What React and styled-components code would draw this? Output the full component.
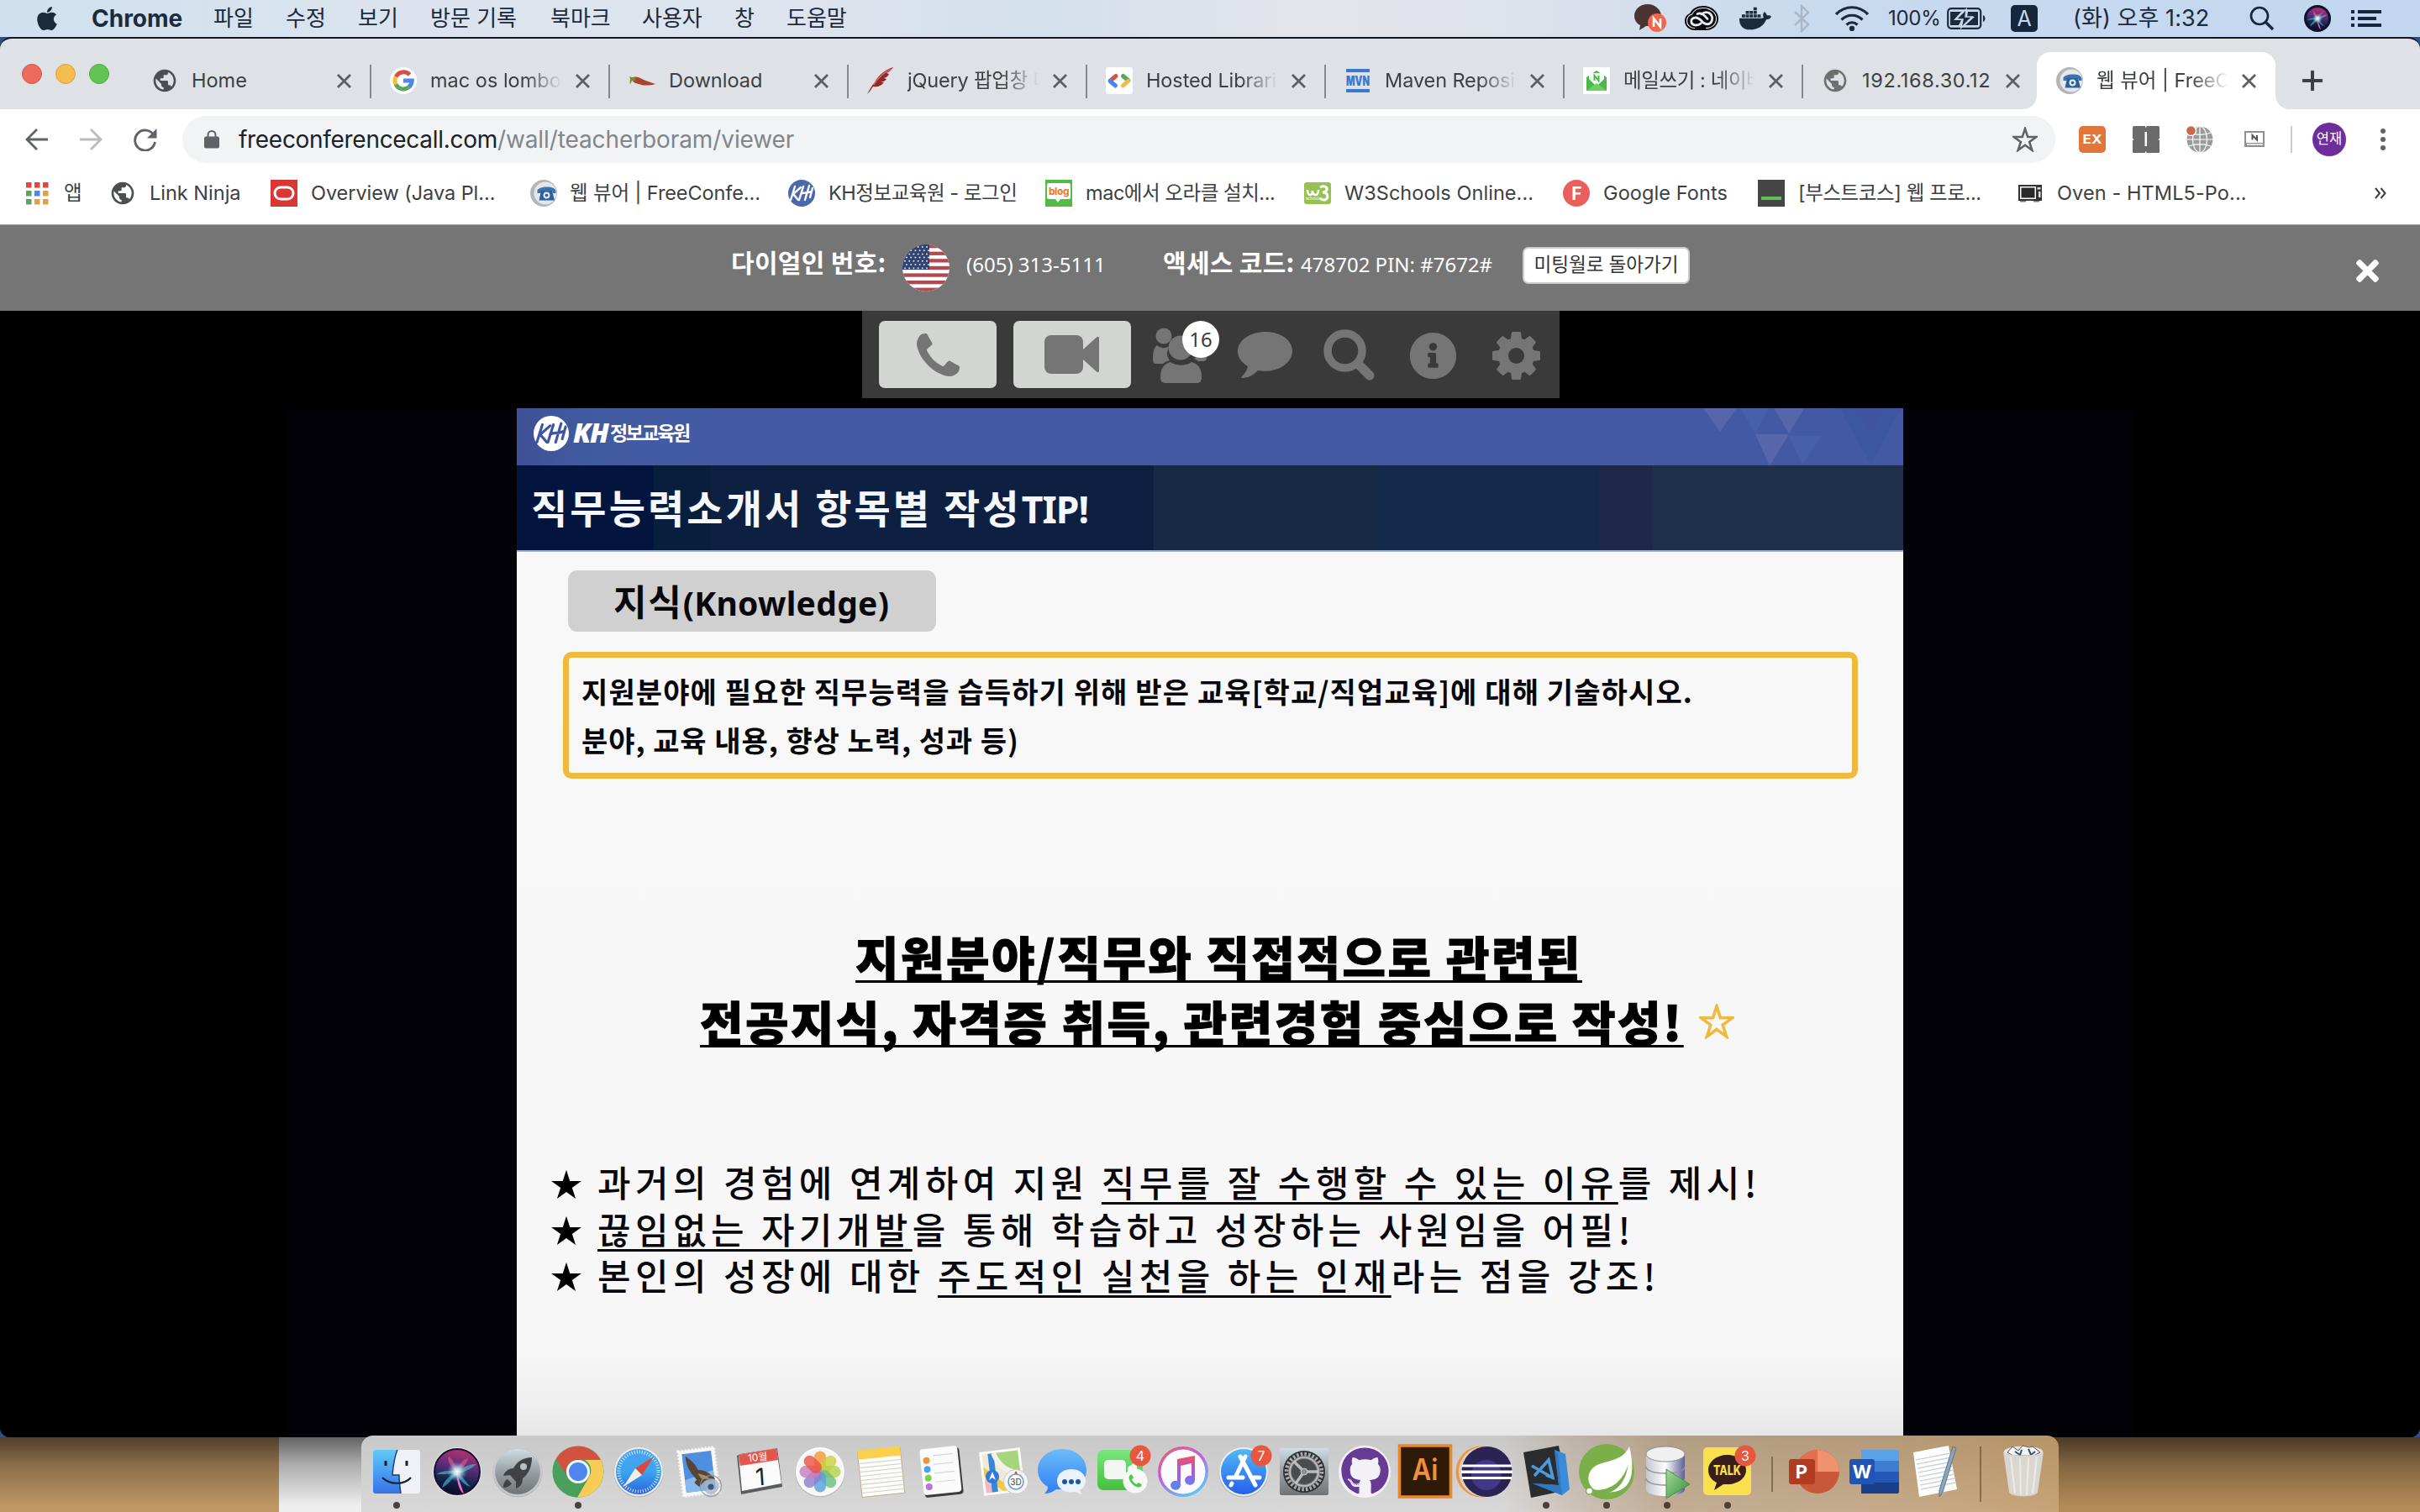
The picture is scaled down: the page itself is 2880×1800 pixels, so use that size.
import React from "react";
import styled, { createGlobalStyle, css } from "styled-components";
import { FaApple, FaDocker, FaGithub, FaInfoCircle, FaTimes } from "react-icons/fa";
import { MdPublic } from "react-icons/md";

const UI = `Inter, "Noto Sans CJK KR", sans-serif`;
const WEB = `"Noto Sans", "Noto Sans CJK KR", sans-serif`;
const DECK = `"Noto Sans CJK KR", "Noto Sans", sans-serif`;

const GlobalStyle = createGlobalStyle`
  * { box-sizing: border-box; }
  html, body { margin: 0; padding: 0; background: #b8925f; overflow: hidden; }
  body { font-family: ${UI}; -webkit-font-smoothing: antialiased; }
  svg { display: block; flex: none; }
`;

const Screen = styled.div`
  width: 2880px;
  height: 1800px;
  display: flex;
  flex-direction: column;
  overflow: hidden;
  background: #33507c;
`;

/* ---------- macOS menu bar ---------- */

const MenuBar = styled.header`
  height: 44px;
  flex: none;
  display: flex;
  align-items: center;
  padding-left: 40px;
  color: #1b2a3c;
  background: linear-gradient(90deg, #cfe0ef 0, #dbe4ee 16%, #dde4ed 33%, #d4e0ec 43%, #e4e5ea 54%, #dfe3ea 62%, #c8daee 74%, #c2d7f0 100%);
`;

const MenuText = styled.span`
  width: ${(p) => p.$w}px;
  flex: none;
  white-space: nowrap;
  font-size: ${(p) => p.$size || 26}px;
  line-height: 40px;
  font-weight: ${(p) => (p.$bold ? 700 : 400)};
  letter-spacing: ${(p) => p.$ls || 0}px;
`;

const MenuSlot = styled.span`
  width: ${(p) => p.$w}px;
  flex: none;
  display: flex;
  align-items: center;
`;

const Spacer = styled.span`
  flex: 1;
`;

/* ---------- browser window ---------- */

const BrowserWindow = styled.main`
  height: 1667px;
  flex: none;
  display: flex;
  flex-direction: column;
  border-top: 2px solid #101828;
  border-radius: 14px 14px 12px 12px;
  background: #000;
  overflow: hidden;
`;

const TabStrip = styled.div`
  height: 84px;
  flex: none;
  display: flex;
  align-items: flex-end;
  padding-left: 26px;
  background: #dee1e6;
`;

const Lights = styled.div`
  width: 131px;
  height: 84px;
  display: flex;
  align-items: center;
  gap: 16px;
`;

const Light = styled.i`
  width: 24px;
  height: 24px;
  border-radius: 50%;
  background: ${(p) => p.$c};
  border: 1px solid ${(p) => p.$b};
`;

const Tab = styled.div`
  position: relative;
  width: ${(p) => p.$w || 284}px;
  height: 68px;
  flex: none;
  display: flex;
  align-items: center;
  padding-left: 23px;
  color: #3c4043;
  ${(p) =>
    p.$divider &&
    css`
      &::after {
        content: "";
        position: absolute;
        right: -1px;
        top: 15px;
        width: 2px;
        height: 40px;
        background: #85888c;
      }
    `}
  ${(p) =>
    p.$active &&
    css`
      margin-left: -2px;
      background: #fff;
      border-radius: 16px 16px 0 0;
      &::before,
      &::after {
        content: "";
        position: absolute;
        bottom: 0;
        width: 16px;
        height: 16px;
      }
      &::before {
        left: -16px;
        background: radial-gradient(circle at 0 0, transparent 15.5px, #fff 16px);
      }
      &::after {
        right: -16px;
        background: radial-gradient(circle at 100% 0, transparent 15.5px, #fff 16px);
      }
    `}
`;

const TabTitle = styled.span`
  width: ${(p) => p.$w || 157}px;
  margin-left: 16px;
  overflow: hidden;
  white-space: nowrap;
  font-size: 23.5px;
  line-height: 36px;
  letter-spacing: ${(p) => p.$ls || 0}px;
  mask-image: ${(p) => (p.$fade ? "linear-gradient(90deg, #000 112px, transparent 157px)" : "none")};
`;

const TabClose = styled.span`
  margin-left: 16px;
`;

const NewTab = styled.span`
  height: 68px;
  display: flex;
  align-items: center;
  margin-left: 31px;
`;

const NavBar = styled.div`
  height: 72px;
  flex: none;
  display: flex;
  align-items: center;
  background: #fff;
`;

const NavSlot = styled.span`
  width: ${(p) => p.$w}px;
  flex: none;
  display: flex;
  justify-content: center;
`;

const Omnibox = styled.div`
  width: 2229px;
  height: 56px;
  display: flex;
  align-items: center;
  padding: 0 21px 0 26px;
  border-radius: 28px;
  background: #f1f3f4;
`;

const Url = styled.span`
  margin-left: 23px;
  flex: 1;
  font-size: 28px;
  letter-spacing: -0.1px;
  line-height: 40px;
  color: #80868b;
  b {
    font-weight: 400;
    color: #202124;
    letter-spacing: -0.3px;
  }
`;

const Avatar = styled.span`
  width: 40px;
  height: 40px;
  border-radius: 50%;
  background: #6f2c9b;
  color: #fff;
  font-size: 16.5px;
  line-height: 38px;
  text-align: center;
`;

const NavDivider = styled.i`
  width: 2px;
  height: 32px;
  background: #c9cbcd;
`;

const BookmarkBar = styled.div`
  height: 66px;
  flex: none;
  display: flex;
  align-items: center;
  padding: 0 0 9px 31px;
  border-bottom: 1px solid #a3a3a3;
  background: #fff;
`;

const Bookmark = styled.span`
  width: ${(p) => p.$w}px;
  flex: none;
  display: flex;
  align-items: center;
  color: #3c4043;
  white-space: nowrap;
  font-size: 23.5px;
  line-height: 36px;
  letter-spacing: ${(p) => p.$ls || 0}px;
`;

const BookmarkText = styled.span`
  margin-left: ${(p) => p.$gap || 16}px;
`;

/* ---------- meeting viewer page ---------- */

const CallHeader = styled.div`
  height: 102px;
  flex: none;
  display: flex;
  align-items: center;
  padding: 0 43px 0 870px;
  background: #757575;
  color: #fff;
  font-family: ${WEB};
`;

const CallLabel = styled.span`
  width: ${(p) => p.$w}px;
  flex: none;
  padding-bottom: 17px;
  white-space: nowrap;
  font-family: ${DECK};
  font-weight: 700;
  font-size: 30px;
  line-height: 40px;
  letter-spacing: ${(p) => p.$ls || 0}px;
`;

const CallValue = styled.span`
  width: ${(p) => p.$w}px;
  flex: none;
  padding-bottom: 8px;
  padding-left: ${(p) => p.$pad || 0}px;
  white-space: nowrap;
  font-size: 24px;
  line-height: 34px;
  letter-spacing: ${(p) => p.$ls || 0}px;
`;

const ReturnButton = styled.button`
  width: 199px;
  height: 44px;
  margin-bottom: 6px;
  padding: 0 0 3px;
  border: 2px solid #ccc;
  border-radius: 7px;
  background: #fff;
  color: #333;
  font: 400 22.6px/36px ${WEB};
  white-space: nowrap;
`;

const CloseWrap = styled.span`
  padding-top: 7px;
`;

const VideoArea = styled.section`
  flex: 1;
  display: flex;
  flex-direction: column;
  align-items: center;
  background: linear-gradient(90deg, #000 340px, #010107 341px, #010107 2540px, #000 2541px);
`;

const ControlWrap = styled.div`
  width: 100%;
  height: 116px;
  flex: none;
  display: flex;
  justify-content: center;
  background: #000;
`;

const ControlBar = styled.div`
  width: 830px;
  height: 104px;
  display: flex;
  align-items: flex-start;
  padding: 12px 0 0 20px;
  background: #3a3a3a;
  margin-left: 2px;
`;

const MediaButton = styled.button`
  width: 140px;
  height: 80px;
  margin-right: ${(p) => p.$mr}px;
  display: flex;
  align-items: center;
  justify-content: center;
  border: 0;
  border-radius: 7px;
  background: #d3d5d2;
`;

const ControlSlot = styled.span`
  position: relative;
  width: ${(p) => p.$w}px;
  height: 82px;
  display: flex;
  align-items: center;
  color: #757575;
`;

const CountBadge = styled.span`
  position: absolute;
  left: 37px;
  top: 0;
  width: 44px;
  height: 44px;
  border-radius: 50%;
  background: #fff;
  color: #3a3a3a;
  font: 400 24px/43px ${WEB};
  text-align: center;
`;

const Slide = styled.article`
  width: 1650px;
  flex: 1;
  display: flex;
  flex-direction: column;
  align-items: flex-start;
  background: linear-gradient(#f8f8f8 0, #f7f7f7 91%, #eeeeee 97%, #e6e6e6 100%);
  color: #08080c;
  font-family: ${DECK};
`;

const BrandBar = styled.div`
  width: 100%;
  height: 68px;
  flex: none;
  display: flex;
  align-items: center;
  padding: 0 0 8px 20px;
  background: linear-gradient(90deg, #3f4f96 0, #405a9f 70px, #435ba3 200px, #4459a3 400px);
  color: #fff;
`;

const BrandLatin = styled.span`
  margin: -3px 0 0 5px;
  width: 44px;
  font: italic 800 32px/40px "Open Sans", sans-serif;
  letter-spacing: -1.5px;
`;

const BrandKorean = styled.span`
  margin-top: -4px;
  font-size: 23px;
  font-weight: 700;
  line-height: 40px;
  letter-spacing: -2.4px;
`;

const BrandPattern = styled.span`
  margin: 0 0 -8px auto;
`;

const TitleBand = styled.h1`
  width: 100%;
  height: 103px;
  flex: none;
  margin: 0;
  padding: 0 0 2px 17px;
  color: #f6f7fa;
  font-size: 47px;
  font-weight: 700;
  line-height: 98px;
  letter-spacing: 3.1px;
  white-space: nowrap;
  border-bottom: 2px solid #a9b0bd;
  background: linear-gradient(90deg, #03153f 0 163px, #071f3c 163px 231px, #0d2042 231px 758px, #172945 758px 1023px, #15294c 1023px 1288px, #1e2849 1288px 1352px, #1e304c 1352px);
`;

const TitleLatin = styled.span`
  font-family: "Noto Sans", sans-serif;
  font-weight: 700;
  font-size: 44.5px;
  letter-spacing: -0.9px;
`;

const TopicChip = styled.div`
  width: 438px;
  height: 73px;
  margin: 22px 0 0 61px;
  padding-left: 54px;
  border-radius: 11px;
  background: #d0d0d0;
  font-size: 43px;
  font-weight: 700;
  line-height: 71px;
  letter-spacing: 1.8px;
  white-space: nowrap;
  span {
    font-family: "Noto Sans", sans-serif;
    font-weight: 700;
    font-size: 39px;
    letter-spacing: 0.3px;
  }
`;

const QuestionBox = styled.div`
  width: 1541px;
  height: 151px;
  margin: 24px 0 0 55px;
  padding: 11px 0 0 15px;
  border: 7px solid #efb93e;
  border-radius: 10px;
  font-size: 34px;
  font-weight: 700;
  line-height: 58px;
  white-space: nowrap;
`;

const QuestionLine = styled.div`
  letter-spacing: ${(p) => p.$ls}px;
`;

const Headline = styled.div`
  display: flex;
  flex-direction: column;
  margin-top: 172px;
  font-size: 56px;
  font-weight: 900;
  color: #000;
  -webkit-text-stroke: 1px #000;
`;

const HeadlineRow = styled.div`
  height: 77px;
  display: flex;
  align-items: center;
  padding-left: ${(p) => p.$indent}px;
  letter-spacing: ${(p) => p.$ls}px;
  line-height: 77px;
  white-space: nowrap;
`;

const Underlined = styled.span`
  text-decoration: underline;
  text-decoration-skip-ink: none;
  text-decoration-thickness: 3px;
  text-underline-offset: ${(p) => p.$off || 6}px;
`;

const HeadlineStar = styled.span`
  margin-left: 18px;
  padding-top: 3px;
`;

const Bullets = styled.ul`
  margin: 126px 0 0;
  padding: 0 0 0 41px;
  list-style: none;
  font-size: 43px;
  font-weight: 500;
  letter-spacing: 5.4px;
`;

const Bullet = styled.li`
  height: 55.4px;
  display: flex;
  align-items: center;
  white-space: nowrap;
  svg {
    margin: 6px 17px 0 -2px;
  }
  div {
    line-height: 55px;
  }
`;

/* ---------- desktop and dock ---------- */

const Desk = styled.footer`
  height: 91px;
  margin-top: -2px;
  flex: none;
  position: relative;
  display: flex;
  justify-content: center;
  background:
    linear-gradient(rgba(0, 0, 0, 0.6), rgba(0, 0, 0, 0.3) 35%, rgba(0, 0, 0, 0.03) 90%) 0 2px no-repeat,
    linear-gradient(90deg, #c69c68 0 332px, #f6f6f6 332px 1900px, #b98f5b 1900px) 0 2px no-repeat;
`;

const Dock = styled.nav`
  width: 2020px;
  height: 91px;
  display: flex;
  padding-left: 6px;
  border-radius: 14px 14px 0 0;
  background:
    linear-gradient(rgba(0, 0, 0, 0.06), rgba(255, 255, 255, 0.08)),
    linear-gradient(90deg, #d5d5d5 0 1360px, #c9bfb4 1440px, #bea78c 1560px, #c0a482 1800px, #c39c6c 2020px);
`;

const DockSlot = styled.span`
  width: 72px;
  flex: none;
  display: flex;
  flex-direction: column;
  align-items: center;
  padding-top: 11px;
`;

const RunningDot = styled.i`
  width: 8px;
  height: 8px;
  margin-top: 4px;
  border-radius: 50%;
  background: #4a4038;
`;

const DockDivider = styled.i`
  width: 2px;
  height: ${(p) => p.$h}px;
  margin: ${(p) => p.$mt}px 14px ${(p) => p.$mt}px 16px;
  background: rgba(90, 65, 40, 0.55);
  flex: none;
`;

/* ---------- icon drawings ---------- */

const T = ({ children, ...p }) => (
  <text textAnchor="middle" fontFamily="Inter, 'Noto Sans CJK KR', sans-serif" {...p}>
    {children}
  </text>
);

const KakaoTray = () => (
  <svg width="38" height="34" viewBox="0 0 38 34">
    <path d="M16 0C7 0 0 6 0 14c0 5 3 9 7 11l-1 6 8-5h2c9 0 16-5 16-12S25 0 16 0z" fill="#4a3432" />
    <circle cx="27" cy="22" r="11" fill="#f0654d" />
    <path d="M23 27V17l8 10V17" stroke="#fff" strokeWidth="2.6" fill="none" />
  </svg>
);
const CloudTray = () => (
  <svg width="40" height="30" viewBox="0 0 40 30">
    <path d="M12 29C5 29 0 24 0 18c0-5 3-8 6-9C9 3 15 0 22 0c10 0 18 7 18 15 0 9-7 14-15 14z" fill="#0a0a0c" />
    <path d="M12 26.500C7 26.500 2.500 23 2.500 18c0-4 3-7 6-8 2-4 7-7.500 13.500-7.500C30 2.500 37.500 8 37.500 15c0 7-5 11.500-12.500 11.500" fill="none" stroke="#dbe4ee" strokeWidth="1.200" />
    <g fill="none" stroke="#e4ebf3" strokeWidth="2.800" strokeLinecap="round">
      <path d="M19 21c-2 2-4 2-6 2-7-1-7-9 0-9 4 0 6 3 9 6 3 2 6 3 9 0 3-4 2-10-3-12-3-1-6 0-8 2" />
      <path d="M15 9.500c5-2 8 1 12 6" />
    </g>
  </svg>
);
const Bluetooth = () => (
  <svg width="20" height="34" viewBox="0 0 20 34" fill="none" stroke="#a9b8c9" strokeWidth="2.4">
    <path d="M1 9l16 15-8 8V2l8 8L1 25" />
  </svg>
);
const Wifi = () => (
  <svg width="42" height="30" viewBox="0 0 42 30" fill="none" stroke="#1b2a3c" strokeWidth="3.2">
    <path d="M2 10C13-1 29-1 40 10" />
    <path d="M8.500 16.500c7-7 18-7 25 0" />
    <path d="M14.500 22.500c4-3.500 9-3.500 13 0" />
    <circle cx="21" cy="27" r="1.600" fill="#1b2a3c" />
  </svg>
);
const Battery = () => (
  <svg width="46" height="26" viewBox="0 0 46 26">
    <rect x="1.200" y="1.200" width="39" height="23.600" rx="4" fill="none" stroke="#1b2a3c" strokeWidth="2.200" />
    <path d="M43 9v8c2-1 2.500-2.500 2.500-4S45 10 43 9z" fill="#1b2a3c" />
    <path d="M4 5h13L8 15h9l-3 6H4zM25 5h12v16H22l11-10h-9z" fill="#1b2a3c" />
    <path d="M23 2L11 14h8l-2 10 13-13h-8z" fill="#1b2a3c" stroke="#c8daee" strokeWidth="1.500" />
  </svg>
);
const InputA = () => (
  <svg width="32" height="32" viewBox="0 0 32 32">
    <rect width="32" height="32" rx="5" fill="#14273c" />
    <T x="16" y="25" fontSize="25" fill="#c5d9ef">A</T>
  </svg>
);
const Search = () => (
  <svg width="30" height="30" viewBox="0 0 30 30" fill="none" stroke="#14273c" strokeWidth="2.700">
    <circle cx="12" cy="12" r="10" />
    <path d="M19 19l9 9" strokeWidth="3.400" />
  </svg>
);
const Siri = ({ size, ring }) => (
  <svg width={size} height={size} viewBox="0 0 64 64">
    <defs>
      <linearGradient id={`sr${size}`} x1=".6" y1="0" x2=".4" y2="1">
        <stop offset="0" stopColor="#b8316f" />
        <stop offset=".4" stopColor="#5a2d78" />
        <stop offset=".7" stopColor="#14254c" />
        <stop offset="1" stopColor="#0b0b22" />
      </linearGradient>
      <radialGradient id={`sg${size}`}>
        <stop offset="0" stopColor="#fff" />
        <stop offset=".35" stopColor="#d5f4f6" stopOpacity=".8" />
        <stop offset="1" stopColor="#4fc5d8" stopOpacity="0" />
      </radialGradient>
    </defs>
    <circle cx="32" cy="32" r={ring ? 29 : 32} fill={ring ? "#e9e9ee" : "#0a1230"} />
    <circle cx="32" cy="32" r="27" fill={`url(#sr${size})`} stroke="#15112e" strokeWidth="2" />
    <path d="M7 35c8-5 16-4 25-4 7-3 14-9 23-8-6 6-14 9-21 11 6 6 10 12 14 16-8-2-12-8-17-14-6 5-10 12-17 15 2-7 7-12 14-17-8 1-14 1-21 1z" fill="#4fc5d8" opacity=".6" />
    <path d="M31 32C24 26 20 19 22 14c5 3 8 10 10 17 1-6 6-13 13-15-1 6-6 12-12 16z" fill="#e05f9c" opacity=".6" />
    <path d="M31 32l9 26c-5-2-8-12-9-26z" fill="#f070c0" />
    <circle cx="32" cy="32" r="12" fill={`url(#sg${size})`} />
  </svg>
);
const ListIcon = () => (
  <svg width="36" height="20" viewBox="0 0 36 20" fill="#14273c">
    <path d="M0 0h4v4H0zM8 0h28v4H8zM0 8h4v4H0zM8 8h22v4H8zM0 16h4v4H0zM8 16h28v4H8z" />
  </svg>
);

const GlobeIcon = ({ color = "#4b4f54" }) => (
  <svg width="32" height="32" viewBox="0 0 24 24">
    <MdPublic size={24} color={color} />
  </svg>
);
const GoogleIcon = () => (
  <svg width="32" height="32" viewBox="0 0 32 32" fill="none" strokeWidth="5">
    <circle cx="16" cy="16" r="16" fill="#fff" />
    <path d="M23.500 9A10 10 0 0 0 7.200 11.500" stroke="#d95140" />
    <path d="M7.200 11.300a10 10 0 0 0 0 9.400" stroke="#f0bd42" />
    <path d="M7.100 20.500A10 10 0 0 0 22.500 23.700" stroke="#58a55c" />
    <path d="M16 16h10.300a10 10 0 0 1-3.800 7.700" stroke="#4f86ec" />
  </svg>
);
const PepperIcon = () => (
  <svg width="32" height="32" viewBox="0 0 32 32">
    <path d="M4 13c4-3 8-1 12 1s10 4 16 6c-6 2-15 2-20 0-5-1-8-3-8-7z" fill="#a8452c" />
    <path d="M1 11l3 1c2 0 4 0 5 2l-3 3-2-1c-1 2-1 3-2 4-1-3 0-5 0-7z" fill="#7d8a3a" />
  </svg>
);
const FeatherIcon = () => (
  <svg width="32" height="32" viewBox="0 0 32 32">
    <path d="M31 0C21 3 13 10 9 18 5 22 3 27 0 32l3-3 4-6c6 1 10-1 13-5h-4c4-1 6-2 7-4l-3-1c4-1 5-3 6-5l-3-1c4-2 6-4 8-7z" fill="#8f2a2a" />
    <path d="M29 2C20 6 13 12 8 21" stroke="#d9655a" strokeWidth="1.500" fill="none" />
  </svg>
);
const HostedIcon = () => (
  <svg width="32" height="32" viewBox="0 0 32 32" fill="none" strokeWidth="5">
    <rect width="32" height="32" rx="4" fill="#fff" />
    <path d="M12 10.500L5.500 16" stroke="#d95140" strokeLinecap="round" />
    <path d="M5 16.500l6.500 5.500" stroke="#4f86ec" strokeLinecap="round" />
    <path d="M20.500 10.500L27 16" stroke="#58a55c" strokeLinecap="round" />
    <path d="M26.500 16.500L20.500 22" stroke="#f0bd42" strokeLinecap="round" />
  </svg>
);
const MavenIcon = () => (
  <svg width="32" height="32" viewBox="0 0 32 32">
    <path d="M2 2h28v4H2zM2 26h28v4H2z" fill="#3a78cf" />
    <T x="16" y="21.500" fontSize="15.500" fontWeight="900" textLength="28" lengthAdjust="spacingAndGlyphs" fill="#3a78cf">MVN</T>
  </svg>
);
const NaverMailIcon = () => (
  <svg width="32" height="32" viewBox="0 0 32 32">
    <rect width="32" height="32" fill="#fff" />
    <path d="M4 12l12-8 12 8v16H4z" fill="#4fb64a" />
    <path d="M7 9c0-1 1-2 2-2h14c1 0 2 1 2 2v5l-9 9-9-9z" fill="#f4fbf3" />
    <path d="M13.500 16v-6l5 6v-6" stroke="#4fb64a" strokeWidth="2" fill="none" />
    <path d="M4 28l12-9 12 9z" fill="#6ad05f" />
  </svg>
);
const PhoneBallIcon = () => (
  <svg width="32" height="32" viewBox="0 0 32 32">
    <circle cx="16" cy="16" r="16" fill="#b4b4b4" />
    <circle cx="18" cy="16" r="13.500" fill="#e3e8ed" />
    <path d="M8.500 13c0-5 20-7 22 0v3h-4v-2.500h-13V16h-5z" fill="#3a72ab" />
    <path d="M13 13h13l3 11.500H10.500z" fill="#2b609b" />
    <circle cx="19.500" cy="18.500" r="4" fill="#dfe8f1" />
    <circle cx="19.500" cy="18.500" r="1.800" fill="#2b609b" />
  </svg>
);
const AppsIcon = () => (
  <svg width="27" height="27" viewBox="0 0 27 27">
    {["#dd4b3e", "#dd4b3e", "#dd4b3e", "#58a55c", "#4f86ec", "#e3a33c", "#58a55c", "#e3a33c", "#e3a33c"].map((c, i) => (
      <rect key={i} x={(i % 3) * 10} y={Math.floor(i / 3) * 10} width="6.500" height="6.500" fill={c} />
    ))}
  </svg>
);
const OracleIcon = () => (
  <svg width="32" height="32" viewBox="0 0 32 32">
    <rect width="32" height="32" fill="#d93832" />
    <rect x="5" y="9" width="22" height="14" rx="7" fill="none" stroke="#fff" strokeWidth="3" />
  </svg>
);
const KHIcon = ({ size = 32, fg = "#fff", bg = "#4a69ad" }) => (
  <svg width={size} height={size} viewBox="0 0 32 32">
    <circle cx="16" cy="16" r="16" fill={bg} />
    <g fill="none" stroke={fg} strokeWidth="2.400" strokeLinecap="round">
      <path d="M8 8L3 24M15 9L6 17l6 7M18 8l-5 16M25 7l-5 17M15 17c4-3 7 0 12-3M29 10l-3 11" />
    </g>
  </svg>
);
const BlogIcon = () => (
  <svg width="32" height="32" viewBox="0 0 32 32">
    <rect width="32" height="32" fill="#52bd45" />
    <path d="M4 4h24a2 2 0 0 1 2 2v15a2 2 0 0 1-2 2H18l-3 4-3-4H4a2 2 0 0 1-2-2V6a2 2 0 0 1 2-2z" fill="#fff" />
    <T x="16" y="17.500" fontSize="12" fontWeight="800" textLength="24" lengthAdjust="spacingAndGlyphs" fill="#e8802f">blog</T>
  </svg>
);
const W3Icon = () => (
  <svg width="32" height="32" viewBox="0 0 32 32">
    <rect y="3" width="32" height="26" rx="3" fill="#97c153" />
    <path d="M4 12c0 8 6 8 6 1 0 7 7 7 7-1" stroke="#fff" strokeWidth="2.600" fill="none" />
    <path d="M19 9c5-3 9 0 8 3-1 2-3 3-5 3 4 0 6 2 6 5-1 5-6 5-9 2" stroke="#fff" strokeWidth="3" fill="none" />
    <T x="11" y="23.500" fontSize="5" fill="#fff">schools</T>
  </svg>
);
const FIcon = () => (
  <svg width="32" height="32" viewBox="0 0 32 32">
    <circle cx="16" cy="16" r="16" fill="#ea5f5d" />
    <T x="16.500" y="23.500" fontSize="21" fontWeight="700" fill="#fff">F</T>
  </svg>
);
const BoostIcon = () => (
  <svg width="32" height="32" viewBox="0 0 32 32">
    <rect width="32" height="32" fill="#454545" />
    <rect x="4" y="20" width="24" height="4" fill="#5cc350" />
  </svg>
);
const OvenIcon = () => (
  <svg width="32" height="32" viewBox="0 0 32 32">
    <path d="M4 24h7v2.500H4zM20 24h7v2.500h-7z" fill="#777" />
    <rect x="2" y="6" width="28" height="19" fill="#333" />
    <rect x="4" y="8" width="19" height="15" fill="#fff" />
    <rect x="5.500" y="9.500" width="16" height="12" fill="#2a2a2a" />
    <path d="M24.500 9h4v2.500h-4zM26 14h2.500v7H26z" fill="#ddd" />
  </svg>
);

const CloseIcon = () => (
  <svg width="17" height="17" viewBox="0 0 17 17" stroke="#5a5e62" strokeWidth="2.800">
    <path d="M1 1l15 15M16 1L1 16" />
  </svg>
);

const Arrow = ({ flip, color }) => (
  <svg width="28" height="28" viewBox="0 0 28 28" fill="none" stroke={color} strokeWidth="2.800">
    <path d={flip ? "M1 14h24M14 2l12 12-12 12" : "M27 14H3M14 2L2 14l12 12"} />
  </svg>
);
const Reload = () => (
  <svg width="30" height="28" viewBox="0 0 30 28">
    <path d="M25 9A12 12 0 1 0 26.500 17" fill="none" stroke="#5f6368" strokeWidth="2.900" />
    <path d="M28.500 1v11.500H17z" fill="#5f6368" />
  </svg>
);
const Lock = () => (
  <svg width="18" height="22" viewBox="0 0 18 22">
    <rect y="7.500" width="18" height="14" rx="2" fill="#5f6368" />
    <path d="M4.500 8V5.500a4.500 4.500 0 0 1 9 0V8" fill="none" stroke="#5f6368" strokeWidth="2" />
  </svg>
);
const STAR = "M16 1l3.700 11.400h12L22 19.500l3.700 11.400L16 23.900 6.300 30.900 10 19.500.300 12.400h12z";
const Star = ({ size, color, w, fill = "none" }) => (
  <svg width={size} height={size} viewBox="-1.500 -1.500 35 35">
    <path d={STAR} fill={fill} stroke={color} strokeWidth={w} />
  </svg>
);
const ExIcon = () => (
  <svg width="32" height="32" viewBox="0 0 32 32">
    <rect width="32" height="32" rx="5" fill="#e2763a" />
    <T x="16" y="21" fontSize="14.500" fontWeight="700" textLength="23" lengthAdjust="spacingAndGlyphs" fill="#fff">EX</T>
  </svg>
);
const PipeIcon = () => (
  <svg width="32" height="32" viewBox="0 0 32 32">
    <rect width="32" height="32" rx="1.500" fill="#6b6b6b" />
    <path d="M14.500 7h2.500v17h-2.500z" fill="#fff" />
    <path d="M15 0h1.500v1.500H15zM15 30.500h1.500V32H15zM0 15h1.200v2H0zM30.800 15H32v2h-1.200z" fill="#fff" />
  </svg>
);
const GridGlobeIcon = () => (
  <svg width="32" height="32" viewBox="0 0 32 32">
    <circle cx="16" cy="16" r="15.500" fill="#9b9b9b" />
    <g fill="none" stroke="#fff" strokeWidth="1.200">
      <path d="M16 0v32M0 16h32M3 8c8 3 18 3 26 0M3 24c8-3 18-3 26 0" />
      <ellipse cx="16" cy="16" rx="8.500" ry="15.500" />
    </g>
    <circle cx="5.500" cy="5.500" r="6" fill="#c96a44" stroke="#fff" strokeWidth="1.500" />
  </svg>
);
const ReaderIcon = () => (
  <svg width="26" height="20" viewBox="0 0 26 20">
    <path d="M2 1h22v17H2z" fill="#fff" stroke="#8f8f8f" strokeWidth="2" />
    <path d="M1 14h24v5H1z" fill="#8f8f8f" />
    <path d="M4 16h19" stroke="#fff" strokeWidth="1.400" />
    <path d="M10.500 10.500V5l5.500 5.500V5" stroke="#555" strokeWidth="2" fill="none" />
  </svg>
);
const Dots = () => (
  <svg width="8" height="28" viewBox="0 0 8 28" fill="#5f6368">
    <circle cx="4" cy="4" r="3" /><circle cx="4" cy="14" r="3" /><circle cx="4" cy="24" r="3" />
  </svg>
);

const Flag = () => (
  <svg width="56" height="56" viewBox="0 0 56 56">
    <clipPath id="flagClip"><circle cx="28" cy="28" r="28" /></clipPath>
    <g clipPath="url(#flagClip)">
      <rect width="56" height="56" fill="#fff" />
      {[0, 1, 2, 3, 4, 5, 6].map((i) => (
        <rect key={i} y={i * 8.600} width="56" height="4.300" fill="#b04a50" />
      ))}
      <rect width="32" height="30" fill="#2f4373" />
      {Array.from({ length: 42 }, (_, i) => (
        <circle key={i} cx={3 + (i % 6) * 5.200 + (Math.floor(i / 6) % 2) * 2} cy={3 + Math.floor(i / 6) * 4.200} r="1" fill="#dfe4ef" />
      ))}
    </g>
  </svg>
);
const HandsetPath =
  "M1408 1240q0 27-10 70.500t-21 68.500q-21 50-122 106-94 51-186 51-27 0-53-3.500t-57.500-12.500-47-14.500-55.500-20.500-49-18q-98-35-175-83-127-79-264-216t-216-264q-48-77-83-175-3-9-18-49t-20.500-55.500-14.500-47-12.500-57.500-3.500-53q0-92 51-186 56-101 106-122 25-11 68.500-21t70.500-10q14 0 21 3 18 6 53 76 11 19 30 54t35 63.500 31 53.500q3 4 17.500 25t21.500 35.500 7 28.500q0 20-28.500 50t-62 55-62 53-28.500 46q0 9 5 22.500t8.500 20.500 14 24 11.500 19q76 137 174 235t235 174q2 1 19 11.500t24 14 20.500 8.500 22.500 5q18 0 46-28.500t53-62 55-62 50-28.500q14 0 28.500 7t35.500 21.500 25 17.500q25 15 53.500 31t63.500 35 54 30q70 35 76 53 3 7 3 21z";
const Handset = () => (
  <svg width="51" height="51" viewBox="0 128 1408 1408" fill="#757575"><path d={HandsetPath} /></svg>
);
const Camera = () => (
  <svg width="66" height="46" viewBox="0 0 66 46" fill="#757575">
    <rect width="46" height="46" rx="8" />
    <path d="M46 17L62 2.500c2-1.500 3-.5 3 1.500v38c0 2-1 3-3 1.500L46 29z" />
  </svg>
);
const People = () => (
  <svg width="66" height="66" viewBox="0 0 66 66" fill="#757575">
    <circle cx="15" cy="10" r="9.500" />
    <path d="M7 21c4 4 11 4 15 1-4 6-4 12 0 17-3 1-6 2-8 4H6c-3 0-4-2-4-5 0-8 1-14 5-17z" />
    <circle cx="35" cy="24" r="14.500" />
    <path d="M51 37c3-2 4-5 5-8 6 0 10 2 10 6 0 3-1 5-4 5h-6z" />
    <path d="M23 41c7 5 18 5 25 0 8 2 12 8 12 18 0 5-2 7-6 7H17c-4 0-6-2-6-7 0-10 4-16 12-18z" />
  </svg>
);
const Chat = () => (
  <svg width="65" height="56" viewBox="0 0 65 56" fill="#757575">
    <path d="M33 0C15 0 0 10 0 23c0 8 5 14 12 18-1 5-3 8-7 12-1 1-1 2 1 2 7 0 13-4 18-9 3 .6 6 .8 9 .8 18 0 32-11 32-24S51 0 33 0z" />
  </svg>
);
const Magnifier = () => (
  <svg width="62" height="62" viewBox="0 0 62 62" fill="none" stroke="#757575">
    <circle cx="25.500" cy="25.500" r="20.500" strokeWidth="9.500" />
    <path d="M41 41l14 14" strokeWidth="11" strokeLinecap="round" />
  </svg>
);
const Cog = () => (
  <svg width="57" height="57" viewBox="0 0 1536 1536" fill="#757575">
    <path d="M1024 768q0-106-75-181t-181-75-181 75-75 181 75 181 181 75 181-75 75-181zm512-109v222q0 12-8 23t-20 13l-185 28q-19 54-39 91 35 50 107 138 10 12 10 25t-9 23q-27 37-99 108t-94 71q-12 0-26-9l-138-108q-44 23-91 38-16 136-29 186-7 28-36 28h-222q-14 0-24.500-8.500t-11.500-21.500l-28-184q-49-16-90-37l-141 107q-10 9-25 9-14 0-25-11-126-114-165-168-7-10-7-23 0-12 8-23 15-21 51-66.500t54-70.500q-27-50-41-99l-183-27q-13-2-21-12.500t-8-23.500v-222q0-12 8-23t19-13l186-28q14-46 39-92-40-57-107-138-10-12-10-24 0-10 9-23 26-36 98.500-107.500t94.500-71.500q13 0 26 10l138 107q44-23 91-38 16-136 29-186 7-28 36-28h222q14 0 24.500 8.500t11.500 21.500l28 184q49 16 90 37l142-107q9-9 24-9 13 0 25 10 129 119 165 170 7 8 7 22 0 12-8 23-15 21-51 66.500t-54 70.500q26 50 41 98l183 28q13 2 21 12.500t8 23.500z" />
  </svg>
);
const Triangles = () => (
  <svg width="260" height="68" viewBox="0 0 260 68">
    <path d="M66 0h34L84 30z" fill="#4860aa" />
    <path d="M22 0h40L42 28z" fill="#5566ab" />
    <path d="M106 0h36L124 30z" fill="#5566ab" />
    <path d="M84 31h40L101 68z" fill="#5867ac" />
    <path d="M124 33h38L140 67z" fill="#4860aa" />
    <path d="M184 0h74L221 66z" fill="#3c57a0" />
    <path d="M203 0h36L221 30z" fill="#40539f" />
  </svg>
);

/* dock artwork, each on a 64 unit square */
const NotifyBadge = ({ n }) => (
  <g>
    <circle cx="53" cy="13" r="12.500" fill="#e8573f" />
    <T x="53" y="19" fontSize="16" fill="#fff">{n}</T>
  </g>
);
const Disc = ({ fill, rim = "#eef0f2" }) => (
  <g>
    <circle cx="32" cy="33" r="29.500" fill="#8a8a8a" opacity=".35" />
    <circle cx="32" cy="32" r="29" fill={rim} />
    <circle cx="32" cy="32" r="27" fill={fill} />
  </g>
);

const dockArt = {
  finder: (
    <g>
      <rect x="4" y="6" width="56" height="52" rx="3" fill="#eef2f7" />
      <path d="M7 6h26c-4 9-5 18-6 30h8c0 8 1 15 2 22H7a3 3 0 0 1-3-3V9a3 3 0 0 1 3-3z" fill="url(#gFinder)" />
      <path d="M33 6c-4 9-5 18-6 30h8c0 8 1 15 2 22" fill="none" stroke="#1d3f74" strokeWidth="1.500" />
      <path d="M19 19v6M44 19v6" stroke="#14202e" strokeWidth="3" />
      <path d="M15 39c9 9 26 9 34 0" fill="none" stroke="#14202e" strokeWidth="2.200" />
    </g>
  ),
  rocket: (
    <g>
      <Disc fill="url(#gSteel)" rim="#c3ccd2" />
      <path d="M49 15c-10 0-18 5-22 13-5 0-10 3-12 9l8-1 7 8 0 8c6-2 8-7 8-12 7-5 11-14 11-25z" fill="#3f4346" />
      <circle cx="39" cy="26" r="4" fill="#b9c2c8" />
      <path d="M20 41c-4 2-5 6-5 10 4 0 8-2 10-5z" fill="#3f4346" />
    </g>
  ),
  chrome: (
    <g>
      <circle cx="32" cy="32" r="30.500" fill="#4a9f5c" />
      <path d="M5.600 17A30.500 30.500 0 0 1 58.600 17.500H32a14.500 14.500 0 0 0-12.500 22z" fill="#d2523f" />
      <path d="M58.900 18A30.500 30.500 0 0 1 31 62.500L44.600 39A14.500 14.500 0 0 0 40 18z" fill="#f8cd55" />
      <path d="M5.800 16.800A30.500 30.500 0 0 0 31 62.400L44.600 39 32 46.500 19.500 39z" fill="#4a9f5c" />
      <circle cx="32" cy="32" r="14" fill="#f4f6f9" />
      <circle cx="32" cy="32" r="11" fill="#4d86ee" />
    </g>
  ),
  safari: (
    <g>
      <Disc fill="url(#gSafari)" rim="#eceef0" />
      <circle cx="32" cy="32" r="23.500" fill="none" stroke="#e4f2fb" strokeWidth="4" strokeDasharray="0.900 2.180" />
      <path d="M50 14L36 36l-8-8z" fill="#e0463c" />
      <path d="M14 50l14-22 8 8z" fill="#f2efec" />
    </g>
  ),
  mail: (
    <g>
      <g transform="rotate(-7 32 32)">
        <rect x="10" y="5" width="43" height="54" fill="#f8f8f8" stroke="#f8f8f8" strokeWidth="3" strokeDasharray="2 2" />
        <rect x="14" y="9" width="35" height="46" fill="#4f8fe0" />
        <path d="M14 40l35-8v23H14z" fill="#8bb8ec" />
        <path d="M18 12c6 5 11 11 13 18 6 0 14 5 19 13-6 0-9 0-13 1l-7 6c-1-2-4-3-5-6l3-3c-6-8-11-17-10-29z" fill="#5a4434" />
        <path d="M30 34c5 1 10 4 14 8l-10-1z" fill="#a88c6c" />
      </g>
      <circle cx="46" cy="49" r="12.500" fill="none" stroke="#8f979f" strokeWidth="1.400" opacity=".8" />
      <circle cx="46" cy="49" r="9" fill="#9fb0c4" stroke="#8f979f" opacity=".7" />
      <circle cx="46" cy="50" r="3.500" fill="#3d5878" />
    </g>
  ),
  calendar: (
    <g>
      <path d="M5 13l4-2 44-7 6 46-49 9z" fill="#585d61" />
      <path d="M7 12L52 4l6 42-47 9z" fill="#fbfbfb" />
      <path d="M7 12L52 4l2 14-45 7z" fill="#e2574c" />
      <T x="30" y="19" fontSize="12" fill="#fff" transform="rotate(-6 30 18)">10월</T>
      <T x="33" y="48" fontSize="28" fill="#222" transform="rotate(-4 33 40)">1</T>
    </g>
  ),
  photos: (
    <g>
      <Disc fill="#f6f6f6" rim="#fdfdfd" />
      {["#f29a38", "#c9cf45", "#b8d24c", "#6cbf83", "#5aa3da", "#8d7fd0", "#c77fc0", "#ee5344"].map((c, i) => (
        <rect key={i} x="25" y="7.500" width="14" height="24.500" rx="7" fill={c} opacity=".82" transform={`rotate(${i * 45} 32 32)`} />
      ))}
    </g>
  ),
  notes: (
    <g transform="rotate(-6 32 32)">
      <rect x="7" y="6" width="51" height="54" fill="#fdfdfa" stroke="#b9ab85" strokeWidth="1" />
      <rect x="7" y="4" width="51" height="11" fill="#fbd04c" />
      <path d="M7 20h51M7 25h51M7 30h51M7 35h51M7 40h51M7 45h51M7 50h51M7 55h51" stroke="#d5d5cf" strokeWidth="1.200" />
    </g>
  ),
  reminders: (
    <g transform="rotate(-6 32 32)">
      <rect x="10" y="5" width="46" height="56" rx="4" fill="#3c3c3e" />
      <rect x="9" y="3" width="45" height="55" rx="4" fill="#fbfbfb" />
      {["#f2933a", "#4aa2ee", "#7fd04a", "#bb73dc"].map((c, i) => (
        <g key={i}>
          <circle cx="16" cy={17 + i * 10.500} r="4" fill={c} />
          <path d={`M24 ${12 + i * 10.500}h24`} stroke="#d8d8d8" strokeWidth="1.200" />
        </g>
      ))}
    </g>
  ),
  maps: (
    <g>
      <g transform="rotate(-7 32 32)">
        <rect x="8" y="6" width="49" height="52" fill="#fbfbf8" />
        <rect x="11" y="9" width="43" height="46" fill="#efe9db" />
        <path d="M24 9h30v26c-14-2-26-10-30-26z" fill="#a6d67c" />
        <path d="M11 24l32 31h-12L11 36z" fill="#f6c945" />
        <path d="M11 38l14 17H11z" fill="#f2b6c4" />
        <path d="M18 9h7v46h-7z" fill="#3b86d8" />
        <path d="M28 9c4 14 14 22 26 24v6c-16-2-28-12-32-30z" fill="#f4f1ea" />
      </g>
      <circle cx="21" cy="38" r="8" fill="#2e7bdb" />
      <path d="M21 32l4 10-4-3-4 3z" fill="#fff" />
      <circle cx="49" cy="44" r="14.500" fill="#f4f4f4" stroke="#c9c9c9" />
      <circle cx="49" cy="44" r="9" fill="#fff" stroke="#6b9cc8" strokeWidth="1.500" />
      <T x="49" y="48" fontSize="10" fill="#444">3D</T>
      <path d="M49 31l2 3.500h-4z" fill="#e33" />
    </g>
  ),
  messages: (
    <g>
      <path d="M32 5C16 5 3 16 3 30c0 9 5 16 12 20 0 4-2 6-4 8 6 0 10-2 14-5h7c16 0 29-9 29-23S48 5 32 5z" fill="url(#gBlue)" />
      <path d="M43 29c10 0 17 6 17 14 0 5-3 9-7 11l2 5-7-3c-13 2-22-4-22-13 0-8 7-14 17-14z" fill="#eaf3fc" />
      <g fill="#1d55a6"><circle cx="35" cy="44" r="3" /><circle cx="43" cy="44" r="3" /><circle cx="51" cy="44" r="3" /></g>
    </g>
  ),
  facetime: (
    <g>
      <rect x="2" y="6" width="54" height="48" rx="7" fill="url(#gGreen)" />
      <rect x="10" y="18" width="26" height="23" rx="5" fill="#f3f7f3" />
      <path d="M38 27l11-8v20l-11-7z" fill="#f3f7f3" />
      <circle cx="47" cy="43" r="14.500" fill="#f8f8f8" />
      <g transform="translate(39.500 35.500) scale(.0107) translate(0 -128)"><path d={HandsetPath} fill="#4fc84a" /></g>
      <NotifyBadge n="4" />
    </g>
  ),
  itunes: (
    <g>
      <circle cx="32" cy="32" r="30" fill="url(#gTunes)" />
      <circle cx="32" cy="32" r="26.500" fill="#fbfbfd" />
      <path d="M25 17l21-4v29a6 5.500 0 1 1-4-5V22l-13 3v23a6 5.500 0 1 1-4-5z" fill="url(#gNote)" />
    </g>
  ),
  appstore: (
    <g>
      <Disc fill="url(#gStore)" />
      <g stroke="#fff" strokeWidth="5" strokeLinecap="round">
        <path d="M34 14L22 39M18 46l-1 2M28 14l18 34M14 39h17M41 39h10" />
      </g>
      <NotifyBadge n="7" />
    </g>
  ),
  settings: (
    <g>
      <rect x="3" y="4" width="58" height="56" rx="2" fill="url(#gSteel)" />
      <circle cx="32" cy="32" r="25" fill="#2e2f31" />
      <circle cx="32" cy="32" r="19" fill="#7e8082" />
      <circle cx="32" cy="32" r="21" fill="none" stroke="#a9abac" strokeWidth="4.500" strokeDasharray="2.600 2.100" />
      <circle cx="32" cy="32" r="15" fill="#4a4b4d" />
      <path d="M32 32L20 20M32 32h17M32 32L22 46" stroke="#b9bbbc" strokeWidth="3.500" />
      <circle cx="32" cy="32" r="4" fill="#8c8e90" stroke="#c9cbcc" />
      <circle cx="32" cy="32" r="17" fill="none" stroke="#c2c4c5" strokeWidth="1.600" />
    </g>
  ),
  github: (
    <g>
      <circle cx="32" cy="32" r="31" fill="#f3f1f5" />
      <g transform="translate(3.500 2.500)"><FaGithub size={58} color="#673a94" /></g>
    </g>
  ),
  ai: (
    <g>
      <rect x="1.500" y="1" width="61" height="61" fill="#2e1a06" stroke="#e8872b" strokeWidth="3.600" />
      <T x="32" y="42" fontSize="35" fontWeight="600" textLength="31" lengthAdjust="spacingAndGlyphs" fill="#f0903a">Ai</T>
    </g>
  ),
  eclipse: (
    <g>
      <circle cx="27" cy="32" r="30.500" fill="#f0963c" />
      <circle cx="30" cy="32" r="30" fill="#d9d2cc" />
      <circle cx="33.500" cy="32" r="30" fill="#2b2453" />
      <circle cx="33" cy="36" r="18" fill="#43378c" />
      <path d="M4 23.500h59v3H4zM3 30.500h61v3.500H3zM4 38h59v3H4z" fill="#fff" />
    </g>
  ),
  vscode: (
    <g>
      <path d="M5 9l42-8 10 53-43 9z" fill="#2b2c2e" />
      <path d="M42 6l13 5 5 42-9 7-35-14 31 2z" fill="#3b8bd8" />
      <path d="M42 6l5 42-31-2 35 14-5-50z" fill="#2f78c4" />
      <path d="M42 6v36l-28 4-6-32z" fill="#2b2c2e" />
      <path d="M15 25l26 15M18 37l17-19 5 21-8-3" fill="none" stroke="#4a9be0" strokeWidth="3.500" />
    </g>
  ),
  spring: (
    <g>
      <circle cx="32" cy="32" r="33" fill="#7aaf4a" />
      <path d="M59 2c6 25 6 50-18 54-9 1-18 0-24-3-10-8-8-22 2-28C32 18 51 20 59 2z" fill="#fff" />
      <path d="M12 53c20 4 38-6 46-30-5 30-22 40-46 33z" fill="#7aaf4a" />
      <circle cx="11.500" cy="55" r="4" fill="#fff" stroke="#7aaf4a" strokeWidth="1.500" />
    </g>
  ),
  sql: (
    <g>
      <path d="M7 11v42c0 5 10 8 23 8s23-3 23-8V11z" fill="url(#gDrum)" />
      <path d="M7 26c0 5 10 8 23 8s23-3 23-8M7 40c0 5 10 8 23 8s23-3 23-8" fill="none" stroke="#8e8f98" strokeWidth="1.500" />
      <ellipse cx="30" cy="11" rx="23" ry="9" fill="#f0f0f0" stroke="#8b8b8b" />
      <path d="M31 29l28 18-28 17z" fill="url(#gPlay)" stroke="#4d8f3f" />
    </g>
  ),
  kakao: (
    <g>
      <rect x="3" y="3" width="57" height="57" rx="5" fill="#f9e04c" />
      <path d="M32 12C19 12 9 20 9 30c0 7 4 12 10 15l-3 9 11-7h5c13 0 22-8 22-17S45 12 32 12z" fill="#3a1e1c" />
      <T x="31.500" y="36" fontSize="15.500" fontWeight="800" textLength="33" lengthAdjust="spacingAndGlyphs" fill="#f9e04c">TALK</T>
      <NotifyBadge n="3" />
    </g>
  ),
  ppt: (
    <g>
      <circle cx="35" cy="32" r="26" fill="#c9583a" />
      <path d="M35 6a26 26 0 0 1 26 26H35z" fill="#f0916f" />
      <path d="M35 6v26H9A26 26 0 0 1 35 6z" fill="#e0704f" />
      <rect x="1" y="17" width="31" height="30" rx="3" fill="#b23c22" />
      <T x="16" y="40" fontSize="22" fontWeight="700" fill="#fff">P</T>
    </g>
  ),
  word: (
    <g>
      <path d="M15 6h43a2 2 0 0 1 2 2v11H15z" fill="#5ba2e8" />
      <path d="M15 19h45v13H15z" fill="#3d7ed2" />
      <path d="M15 32h45v13H15z" fill="#2458b4" />
      <path d="M15 45h45v11a2 2 0 0 1-2 2H15z" fill="#1a3f8a" />
      <rect x="1" y="17" width="30" height="30" rx="3" fill="#2155b5" />
      <T x="16" y="40" fontSize="22" fontWeight="700" fill="#fff">W</T>
    </g>
  ),
  textedit: (
    <g>
      <path d="M5 9l42-8 10 52-45 9z" fill="#fdfdfd" />
      <path d="M8 18l41-8M9 23l41-8M10 28l41-8M11 33l41-8M12 38l41-8M13 43l41-8M13 48l41-8M14 53l41-8" stroke="#cbd2da" strokeWidth="1.300" />
      <path d="M52 2l4 2-16 52-4 6 0-8z" fill="#8ba5bd" stroke="#5d7388" strokeWidth="1" />
    </g>
  ),
  trash: (
    <g>
      <ellipse cx="32" cy="8" rx="23" ry="6.500" fill="#e8e6e2" />
      <path d="M13 9l6-7 7 5 5-6 8 2 4-1 9 7-8 4H20z" fill="#f4f4f4" stroke="#555" strokeWidth="1" />
      <path d="M22 8l6 4 2-6M38 5l3 7 5-4" stroke="#33506a" strokeWidth="2" fill="none" />
      <path d="M8 8c2 6 46 6 48 0l-7 48c-1 7-33 7-34 0z" fill="#dcdad7" opacity=".93" />
      <path d="M17 14l5 44M28 16l1 44M38 16l-2 44M48 14l-5 44" stroke="#f4f3f1" strokeWidth="2" opacity=".7" />
    </g>
  ),
};

const Gradient = ({ id, stops, x2 = 0, y2 = 1 }) => (
  <linearGradient id={id} x1="0" y1="0" x2={x2} y2={y2}>
    {stops.map((c, i) => (
      <stop key={i} offset={i / (stops.length - 1)} stopColor={c} />
    ))}
  </linearGradient>
);
const SharedGradients = () => (
  <svg width="0" height="0">
    <defs>
      <Gradient id="gFinder" stops={["#5fcbf8", "#3672e8"]} />
      <Gradient id="gSteel" stops={["#cfdde4", "#98a0a4", "#6f7376"]} />
      <Gradient id="gSafari" stops={["#4aa3f3", "#3aa5ee", "#2d62dc"]} />
      <Gradient id="gBlue" stops={["#6cbcf9", "#2f7ff5"]} />
      <Gradient id="gGreen" stops={["#79e77c", "#45c03c"]} />
      <Gradient id="gTunes" x2={0.6} y2={1} stops={["#f25c5c", "#c05ee0", "#5dc3f5"]} />
      <Gradient id="gNote" stops={["#f0525c", "#a85ae0", "#4b8df4"]} />
      <Gradient id="gStore" stops={["#4fb9f9", "#2560ea"]} />
      <Gradient id="gDrum" x2={1} y2={0} stops={["#c4c6d0", "#ffffff", "#5b5f93"]} />
      <Gradient id="gPlay" x2={1} y2={1} stops={["#a8dd98", "#2f8a3a"]} />
    </defs>
  </svg>
);

/* ---------- data ---------- */

const menus = [
  ["파일", 86], ["수정", 86], ["보기", 86], ["방문 기록", 143], ["북마크", 109],
  ["사용자", 110], ["창", 62], ["도움말", 100],
];

const tabs = [
  { icon: <GlobeIcon />, title: "Home" },
  { icon: <GoogleIcon />, title: "mac os lombo", fade: true },
  { icon: <PepperIcon />, title: "Download" },
  { icon: <FeatherIcon />, title: "jQuery 팝업창 다", fade: true, ls: -0.2 },
  { icon: <HostedIcon />, title: "Hosted Librari", fade: true, ls: -0.1 },
  { icon: <MavenIcon />, title: "Maven Reposi", fade: true, ls: -0.1 },
  { icon: <NaverMailIcon />, title: "메일쓰기 : 네이버", fade: true, ls: -0.4 },
  { icon: <GlobeIcon color="#6f6f6f" />, title: "192.168.30.12", w: 281, tw: 155, ls: 0.65 },
  { icon: <PhoneBallIcon />, title: "웹 뷰어 | FreeC", fade: true, active: true },
];

const bookmarks = [
  { icon: <AppsIcon />, text: "앱", w: 99, gap: 18 },
  { icon: <GlobeIcon />, text: "Link Ninja", w: 192, gap: 16 },
  { icon: <OracleIcon />, text: "Overview (Java Pl...", w: 309, ls: -0.05 },
  { icon: <PhoneBallIcon />, text: "웹 뷰어 | FreeConfe...", w: 307, gap: 15, ls: -0.1 },
  { icon: <KHIcon />, text: "KH정보교육원 - 로그인", w: 306, ls: -0.45 },
  { icon: <BlogIcon />, text: "mac에서 오라클 설치...", w: 308, ls: -0.45 },
  { icon: <W3Icon />, text: "W3Schools Online...", w: 308, ls: 0.05 },
  { icon: <FIcon />, text: "Google Fonts", w: 232, ls: 0.1 },
  { icon: <BoostIcon />, text: "[부스트코스] 웹 프로...", w: 308, ls: -0.4 },
  { icon: <OvenIcon />, text: "Oven - HTML5-Po...", w: 426, ls: 0.1 },
];

const dockApps = [
  ["finder", true], ["siri"], ["rocket"], ["chrome", true], ["safari"], ["mail"], ["calendar"], ["photos"],
  ["notes"], ["reminders"], ["maps"], ["messages"], ["facetime"], ["itunes"], ["appstore"], ["settings"],
  ["github"], ["ai"], ["eclipse"], ["vscode", true], ["spring", true], ["sql", true], ["kakao", true],
];

const DockApp = ({ name, running }) => (
  <DockSlot>
    {name === "siri" ? (
      <Siri size={64} ring />
    ) : (
      <svg width="64" height="64" viewBox="0 0 64 64" overflow="visible">{dockArt[name]}</svg>
    )}
    {running && <RunningDot />}
  </DockSlot>
);

export default function App() {
  return (
    <Screen>
      <GlobalStyle />
      <MenuBar>
        <MenuSlot $w={69}><FaApple size={32} /></MenuSlot>
        <MenuText $w={145} $bold $size={28}>Chrome</MenuText>
        {menus.map(([t, w]) => (
          <MenuText key={t} $w={w}>{t}</MenuText>
        ))}
        <Spacer />
        <MenuSlot $w={60}><KakaoTray /></MenuSlot>
        <MenuSlot $w={65}><CloudTray /></MenuSlot>
        <MenuSlot $w={65}><FaDocker size={38} /></MenuSlot>
        <MenuSlot $w={48}><Bluetooth /></MenuSlot>
        <MenuSlot $w={64}><Wifi /></MenuSlot>
        <MenuText $w={70} $size={24} $ls={-0.3}>100%</MenuText>
        <MenuSlot $w={76}><Battery /></MenuSlot>
        <MenuSlot $w={74}><InputA /></MenuSlot>
        <MenuText $w={210} $size={27} $ls={0.1}>(화) 오후 1:32</MenuText>
        <MenuSlot $w={65}><Search /></MenuSlot>
        <MenuSlot $w={56}><Siri size={32} /></MenuSlot>
        <MenuSlot $w={82}><ListIcon /></MenuSlot>
      </MenuBar>

      <BrowserWindow>
        <TabStrip>
          <Lights>
            <Light $c="#ec6a5e" $b="#d5554a" />
            <Light $c="#f4bd4f" $b="#dba23c" />
            <Light $c="#61c455" $b="#50a944" />
          </Lights>
          {tabs.map((t, i) => (
            <Tab key={t.title} $active={t.active} $divider={i < 7} $w={t.w}>
              {t.icon}
              <TabTitle $fade={t.fade} $w={t.tw} $ls={t.ls}>{t.title}</TabTitle>
              <TabClose><CloseIcon /></TabClose>
            </Tab>
          ))}
          <NewTab>
            <svg width="26" height="26" viewBox="0 0 26 26" stroke="#3c4043" strokeWidth="4"><path d="M13 1v24M1 13h24" /></svg>
          </NewTab>
        </TabStrip>

        <NavBar>
          <NavSlot $w={87}><Arrow color="#5f6368" /></NavSlot>
          <NavSlot $w={42}><Arrow flip color="#b9bbbe" /></NavSlot>
          <NavSlot $w={88}><Reload /></NavSlot>
          <Omnibox>
            <Lock />
            <Url><b>freeconferencecall.com</b>/wall/teacherboram/viewer</Url>
            <Star size={30} color="#5f6368" w="3" />
          </Omnibox>
          <NavSlot $w={88}><ExIcon /></NavSlot>
          <NavSlot $w={40}><PipeIcon /></NavSlot>
          <NavSlot $w={88}><GridGlobeIcon /></NavSlot>
          <NavSlot $w={41}><ReaderIcon /></NavSlot>
          <NavSlot $w={48}><NavDivider /></NavSlot>
          <NavSlot $w={42}><Avatar>연재</Avatar></NavSlot>
          <NavSlot $w={86}><Dots /></NavSlot>
        </NavBar>

        <BookmarkBar>
          {bookmarks.map((b) => (
            <Bookmark key={b.text} $w={b.w} $ls={b.ls}>
              {b.icon}
              <BookmarkText $gap={b.gap}>{b.text}</BookmarkText>
            </Bookmark>
          ))}
          <svg width="14" height="14" viewBox="0 0 14 14" fill="none" stroke="#3c4043" strokeWidth="2"><path d="M1 1l5 6-5 6M7.500 1l5 6-5 6" /></svg>
        </BookmarkBar>

        <CallHeader>
          <CallLabel $w={204} $ls={0.3}>다이얼인 번호:</CallLabel>
          <Flag />
          <CallValue $w={254} $pad={20}>(605) 313-5111</CallValue>
          <CallLabel $w={164} $ls={0.3}>액세스 코드:</CallLabel>
          <CallValue $w={264}>478702 PIN: #7672#</CallValue>
          <ReturnButton>미팅월로 돌아가기</ReturnButton>
          <Spacer />
          <CloseWrap><FaTimes size={39} /></CloseWrap>
        </CallHeader>

        <VideoArea>
          <ControlWrap>
            <ControlBar>
              <MediaButton $mr={20}><Handset /></MediaButton>
              <MediaButton $mr={24}><Camera /></MediaButton>
              <ControlSlot $w={103}><People /><CountBadge>16</CountBadge></ControlSlot>
              <ControlSlot $w={102}><Chat /></ControlSlot>
              <ControlSlot $w={102}><Magnifier /></ControlSlot>
              <ControlSlot $w={99}><FaInfoCircle size={57} /></ControlSlot>
              <ControlSlot $w={57}><Cog /></ControlSlot>
            </ControlBar>
          </ControlWrap>

          <Slide>
            <BrandBar>
              <KHIcon size={42} bg="#fff" fg="#3f55a0" />
              <BrandLatin>KH</BrandLatin>
              <BrandKorean>정보교육원</BrandKorean>
              <BrandPattern><Triangles /></BrandPattern>
            </BrandBar>
            <TitleBand>직무능력소개서 항목별 작성<TitleLatin>TIP!</TitleLatin></TitleBand>
            <TopicChip>지식<span>(Knowledge)</span></TopicChip>
            <QuestionBox>
              <QuestionLine $ls={1.1}>지원분야에 필요한 직무능력을 습득하기 위해 받은 교육[학교/직업교육]에 대해 기술하시오.</QuestionLine>
              <QuestionLine $ls={0.95}>분야, 교육 내용, 향상 노력, 성과 등)</QuestionLine>
            </QuestionBox>
            <Headline>
              <HeadlineRow $indent={403} $ls={2.5}>
                <Underlined $off={5}>지원분야/직무와 직접적으로 관련된</Underlined>
              </HeadlineRow>
              <HeadlineRow $indent={218} $ls={2.45}>
                <Underlined $off={5}>전공지식, 자격증 취득, 관련경험 중심으로 작성!</Underlined>
                <HeadlineStar><Star size={42} color="#efbb3f" w="3" /></HeadlineStar>
              </HeadlineRow>
            </Headline>
            <Bullets>
              <Bullet>
                <Star size={40} color="#000" w="0" fill="#000" />
                <div>과거의 경험에 연계하여 지원 <Underlined>직무를 잘 수행할 수 있는 이유</Underlined>를 제시!</div>
              </Bullet>
              <Bullet>
                <Star size={40} color="#000" w="0" fill="#000" />
                <div><Underlined>끊임없는 자기개발</Underlined>을 통해 학습하고 성장하는 사원임을 어필!</div>
              </Bullet>
              <Bullet>
                <Star size={40} color="#000" w="0" fill="#000" />
                <div>본인의 성장에 대한 <Underlined>주도적인 실천을 하는 인재</Underlined>라는 점을 강조!</div>
              </Bullet>
            </Bullets>
          </Slide>
        </VideoArea>
      </BrowserWindow>

      <Desk>
        <SharedGradients />
        <Dock>
          {dockApps.map(([name, running]) => (
            <DockApp key={name} name={name} running={running} />
          ))}
          <DockDivider $h={42} $mt={25} />
          <DockApp name="ppt" />
          <DockApp name="word" />
          <DockApp name="textedit" />
          <DockDivider $h={66} $mt={13} />
          <DockApp name="trash" />
        </Dock>
      </Desk>
    </Screen>
  );
}
